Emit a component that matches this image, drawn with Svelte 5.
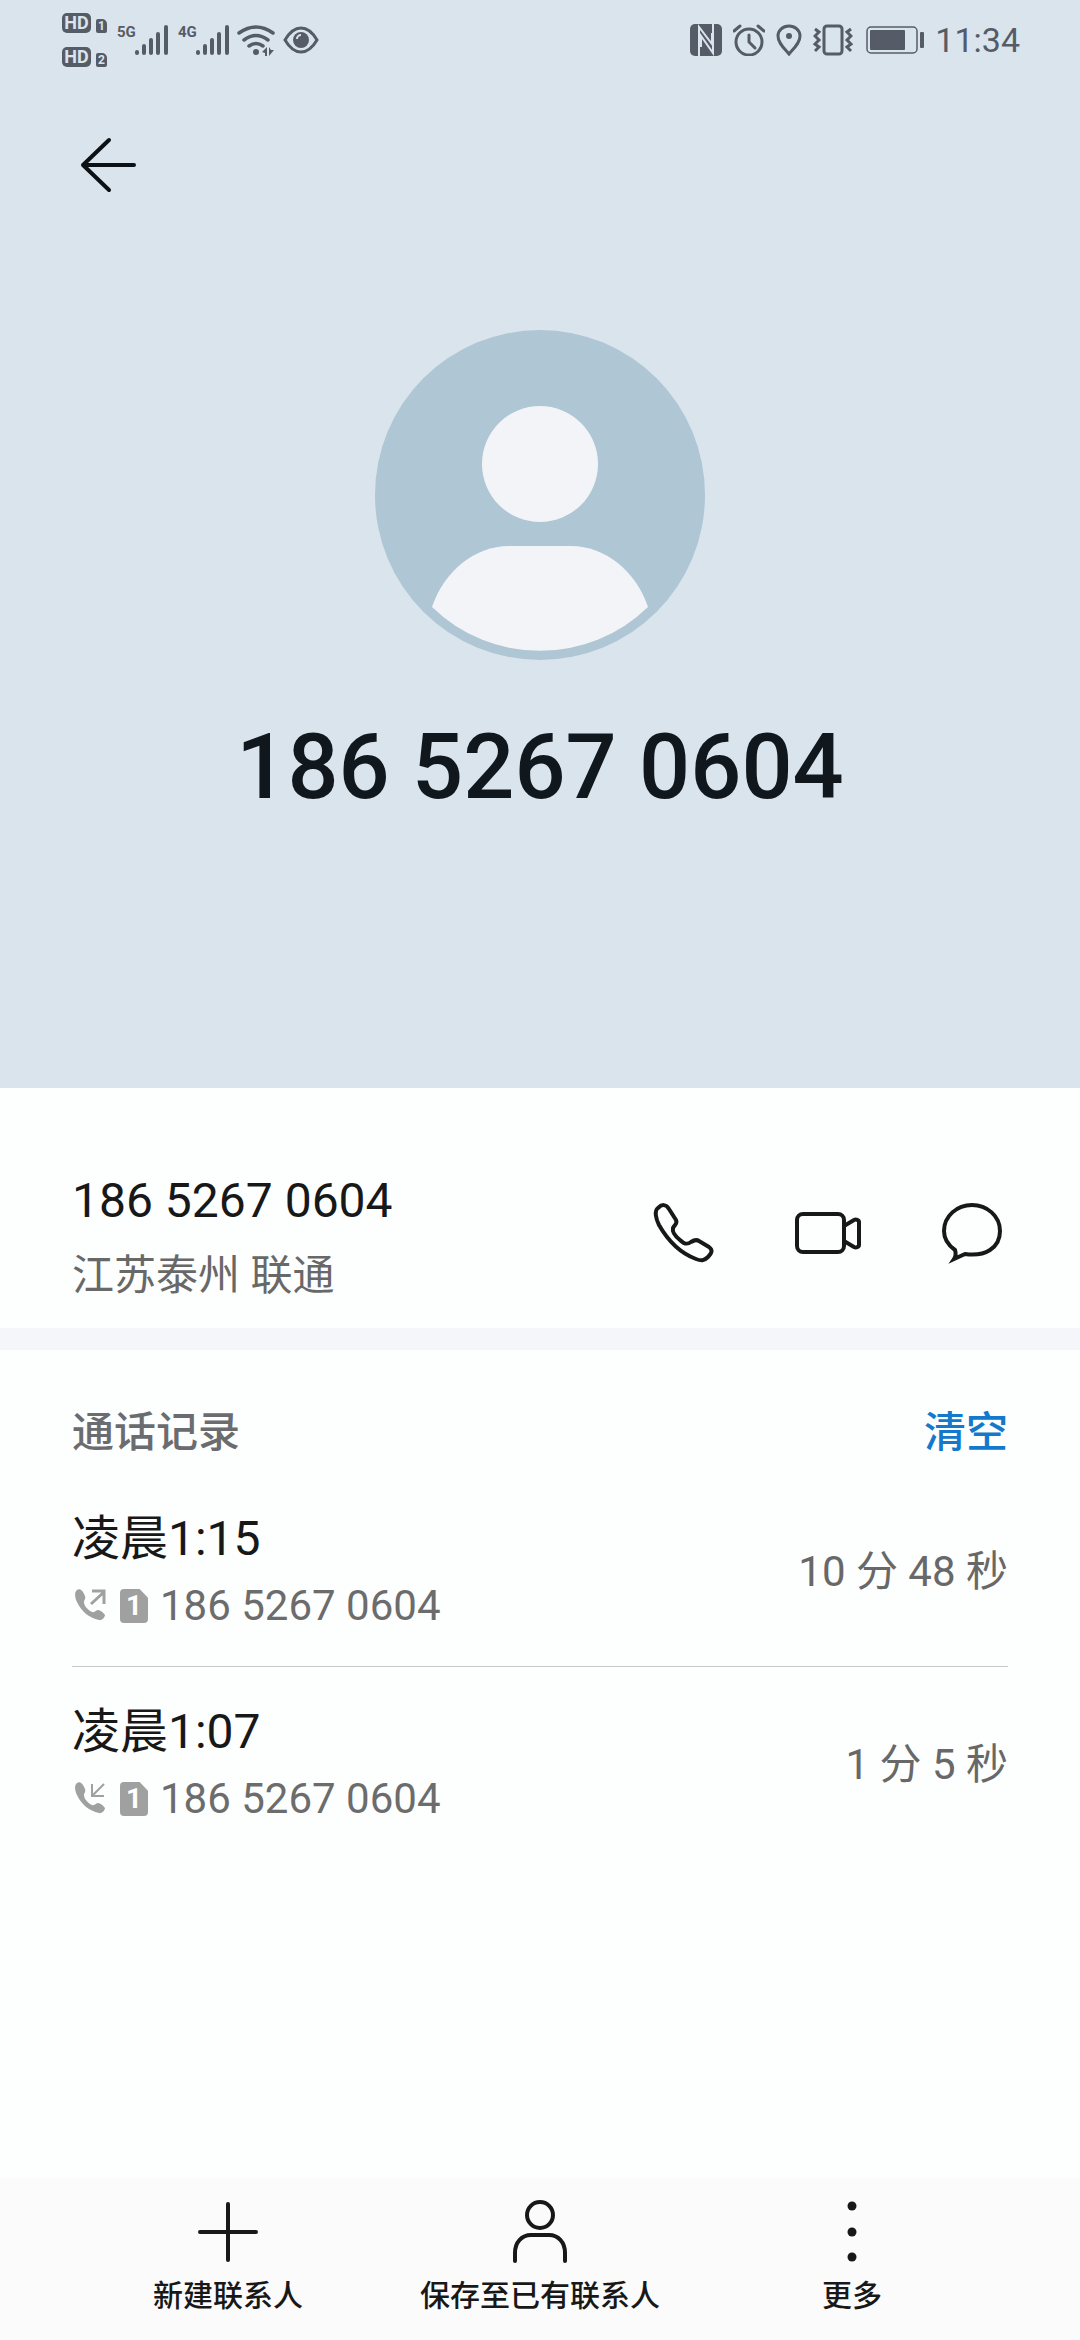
<script>
  const number = '186 5267 0604';
  const region = '江苏泰州 联通';

  let calls = $state([
    { time: '凌晨1:15', type: 'outgoing', sim: 1, duration: '10 分 48 秒' },
    { time: '凌晨1:07', type: 'incoming', sim: 1, duration: '1 分 5 秒' }
  ]);

  function clearCalls() {
    calls = [];
  }
</script>

{#snippet signal()}
  <svg width="36" height="32" viewBox="0 0 36 32" stroke="currentColor" stroke-width="4" stroke-linecap="round">
    <path d="M3 29v-1M10 29v-7M17 29V16M24 29V10M32 29V3" />
  </svg>
{/snippet}

<div class="page">
  <header>
    <div class="status">
      <div class="group">
        <div class="hd-list">
          {#each [1, 2] as slot}
            <div class="hd-row"><span class="hd">HD</span><span class="slot">{slot}</span></div>
          {/each}
        </div>
        <div class="net"><span>5G</span>{@render signal()}</div>
        <div class="net second"><span>4G</span>{@render signal()}</div>
        <svg class="wifi" width="38" height="32" viewBox="0 0 38 32" fill="none" stroke="currentColor" stroke-width="3.5" stroke-linecap="round">
          <path d="M2 9Q19-3 36 9M7 16Q19 7 31 16M12 22Q19 17 26 22" />
          <circle cx="19" cy="28" r="3" fill="currentColor" stroke="none" />
          <path d="M30 23v9h-2v-3l-3-1zM32 23v9l5-6h-3z" fill="currentColor" stroke="none" />
        </svg>
        <svg width="36" height="28" viewBox="0 0 36 28" fill="none" stroke="currentColor" stroke-width="3">
          <path d="M2 14Q9 2 18 2T34 14Q27 26 18 26T2 14z" />
          <circle cx="18" cy="14" r="8" fill="currentColor" stroke="none" />
          <path d="M14 13a4 4 0 0 1 4-4" stroke="#dae4ed" stroke-width="2" />
        </svg>
      </div>
      <div class="group right">
        <svg width="32" height="32" viewBox="0 0 32 32">
          <rect width="32" height="32" rx="5" fill="currentColor" />
          <path d="M9 32V3L22 20V9M23 0v29L11 12v11" fill="none" stroke="#dae4ed" stroke-width="2" />
        </svg>
        <svg width="32" height="32" viewBox="0 0 32 32" fill="none" stroke="currentColor" stroke-width="3">
          <circle cx="16" cy="18" r="13" />
          <path d="M16 11v7l6 6M1 7l6-5M31 7l-6-5" stroke-linecap="round" />
        </svg>
        <svg width="26" height="32" viewBox="0 0 26 32" fill="none" stroke="currentColor" stroke-width="3">
          <path d="M13 30C8 24 2 19 2 12a11 10 0 0 1 22 0c0 7-6 12-11 18z" />
          <circle cx="13" cy="12" r="3" fill="currentColor" stroke="none" />
        </svg>
        <svg width="40" height="32" viewBox="0 0 40 32" fill="none" stroke="currentColor" stroke-width="3">
          <rect x="11" y="2" width="18" height="28" rx="3" />
          <path d="M2 5l4 3-4 4 4 4-4 4 4 3-4 4M38 5l-4 3 4 4-4 4 4 4-4 3 4 4" />
        </svg>
        <svg class="battery" width="58" height="28" viewBox="0 0 58 28">
          <rect x="1" y="1" width="50" height="26" rx="4" fill="none" stroke="currentColor" stroke-width="1.5" />
          <rect x="4" y="4" width="35" height="20" rx="1" fill="currentColor" />
          <rect x="54" y="6" width="4" height="16" rx="1" fill="currentColor" />
        </svg>
        <span class="clock">11:34</span>
      </div>
    </div>

    <button class="back" aria-label="返回">
      <svg width="60" height="60" viewBox="0 0 60 60" fill="none" stroke="currentColor" stroke-width="4" stroke-linecap="round" stroke-linejoin="round">
        <path d="M56 30H5M31 5L5 30l26 25" />
      </svg>
    </button>

    <svg class="avatar" width="330" height="330" viewBox="0 0 330 330">
      <circle cx="165" cy="165" r="165" fill="#afc6d4" />
      <circle cx="165" cy="134" r="58" fill="#f2f4f8" />
      <path d="M57 277C69 241 100 216 134 216h62c34 0 65 25 77 61a155 155 0 0 1-216 0z" fill="#f2f4f8" />
    </svg>
    <h1>{number}</h1>
  </header>

  <section class="contact">
    <div>
      <div class="phone">{number}</div>
      <div class="region">{region}</div>
    </div>
    <div class="actions">
      <button aria-label="拨打电话">
        <svg width="72" height="72" viewBox="0 0 72 72">
          <path d="M10 11C6 14 8 22 11 28C19 42 32 56 48 62C53 64 56 64 60 60C64 56 65 53 61 50L51 44C48 42 46 43 43 45C39 48 36 47 32 43C27 39 24 35 25 31C26 28 30 27 28 23L21 12C18 7 14 7 10 11z" />
        </svg>
      </button>
      <button aria-label="视频通话">
        <svg width="72" height="72" viewBox="0 0 72 72">
          <rect x="5" y="17" width="47" height="38" rx="6" />
          <path d="M52 29l10-6c2-1 5 0 5 2v23c0 2-3 3-5 2l-10-6" />
        </svg>
      </button>
      <button aria-label="发送信息">
        <svg width="72" height="72" viewBox="0 0 72 72">
          <path d="M19 53C12 48 8 41 8 34C8 19 21 8 36 8S64 19 64 34C64 51 49 60 29 57L18 62C20 59 20 56 19 53z" stroke-linejoin="miter" />
        </svg>
      </button>
    </div>
  </section>

  <section class="log">
    <div class="log-head">
      <h2>通话记录</h2>
      <button class="clear" onclick={clearCalls}>清空</button>
    </div>
    <ul>
      {#each calls as call}
        <li>
          <div>
            <div class="time">{call.time}</div>
            <div class="detail">
              <svg width="36" height="36" viewBox="0 0 36 36" fill="none" stroke="#a0a0a0" stroke-width="3">
                <path d="M5 2C2 4 3 10 5 14C9 23 17 30 27 32C30 33 33 29 33 27C32 25 28 22 26 22C24 22 23 25 20 24C16 22 12 18 12 14C12 12 14 11 13 8C11 3 8 0 5 2z" fill="#a0a0a0" stroke="none" />
                {#if call.type === 'outgoing'}
                  <path d="M19 16L32 4M20 3h12v13" />
                {:else}
                  <path d="M32 3L20 15M20 3v12h12" stroke-width="2" />
                {/if}
              </svg>
              <span class="sim">{call.sim}</span>
              <span>{number}</span>
            </div>
          </div>
          <div class="duration">{call.duration}</div>
        </li>
      {/each}
    </ul>
  </section>

  <nav>
    <button>
      <svg width="72" height="72" viewBox="0 0 72 72"><path d="M36 8v56M8 36h56" /></svg>
      <span>新建联系人</span>
    </button>
    <button>
      <svg width="72" height="72" viewBox="0 0 72 72">
        <circle cx="36" cy="19" r="13" />
        <path d="M11 65V57C11 46 18 39 27 39h18c9 0 16 7 16 18v8" />
      </svg>
      <span>保存至已有联系人</span>
    </button>
    <button>
      <svg width="72" height="72" viewBox="0 0 72 72">
        <g fill="currentColor" stroke="none">
          <circle cx="36" cy="10" r="4.5" />
          <circle cx="36" cy="36" r="4.5" />
          <circle cx="36" cy="61" r="4.5" />
        </g>
      </svg>
      <span>更多</span>
    </button>
  </nav>
</div>

<style>
  :global(body) {
    margin: 0;
    background: #fdfefe;
  }
  .page {
    display: flex;
    flex-direction: column;
    min-height: 100vh;
    font-family: Roboto, 'Noto Sans CJK SC', sans-serif;
    color: #181818;
  }
  svg {
    display: block;
    flex: none;
  }
  button {
    padding: 0;
    border: 0;
    background: none;
    color: inherit;
    font: inherit;
    cursor: pointer;
  }
  h1, h2, ul {
    margin: 0;
    padding: 0;
  }

  header {
    display: flex;
    flex-direction: column;
    align-items: center;
    padding-bottom: 264px;
    background: #dae4ed;
  }
  .status {
    align-self: stretch;
    display: flex;
    justify-content: space-between;
    height: 80px;
    padding: 0 60px;
    color: #555c68;
  }
  .group {
    display: flex;
    align-items: center;
  }
  .right {
    gap: 11px;
  }
  .hd-list {
    display: flex;
    flex-direction: column;
    gap: 14px;
    padding-left: 2px;
  }
  .hd-row {
    display: flex;
    align-items: flex-end;
    gap: 5px;
  }
  .hd, .slot {
    background: #555c68;
    color: #dae4ed;
    font-weight: 700;
    text-align: center;
  }
  .hd {
    width: 29px;
    border-radius: 5px;
    font-size: 18px;
    line-height: 20px;
  }
  .slot {
    width: 11px;
    border-radius: 2px 5px 2px 2px;
    font-size: 12px;
    line-height: 14px;
  }
  .net {
    display: flex;
    align-items: flex-start;
    margin-left: 10px;
  }
  .net span {
    width: 17px;
    font-size: 15px;
    font-weight: 700;
    line-height: 16px;
  }
  .net.second {
    margin-left: 8px;
  }
  .wifi {
    margin: 0 8px 0 6px;
  }
  .clock {
    font-size: 34px;
    line-height: 40px;
  }
  .battery {
    margin-left: 2px;
  }
  .back {
    align-self: flex-start;
    margin: 55px 0 0 78px;
    color: #0c1116;
  }
  .avatar {
    margin-top: 135px;
  }
  h1 {
    margin-top: 52px;
    color: #10171d;
    font-size: 90px;
    font-weight: 500;
    line-height: 112px;
  }

  .contact {
    display: flex;
    justify-content: space-between;
    align-items: flex-start;
    padding: 76px 72px 14px;
    border-bottom: 22px solid #f4f6fa;
  }
  .phone {
    font-size: 48px;
    line-height: 74px;
  }
  .region {
    color: #686868;
    font-size: 42px;
    line-height: 76px;
  }
  .actions {
    display: flex;
    gap: 72px;
    padding-top: 33px;
  }
  .actions svg, nav svg {
    fill: none;
    stroke: currentColor;
    stroke-width: 4;
    stroke-linecap: round;
    stroke-linejoin: round;
  }

  .log {
    flex: 1;
    padding: 0 72px;
  }
  .log-head {
    display: flex;
    justify-content: space-between;
    padding: 53px 0 11px;
    line-height: 60px;
  }
  h2, .clear {
    font-size: 42px;
    font-weight: 500;
  }
  h2 {
    color: #6a6c6f;
  }
  .clear {
    color: #1479cc;
  }
  ul {
    list-style: none;
  }
  li {
    display: flex;
    justify-content: space-between;
    align-items: center;
    padding: 31px 0 27px;
  }
  li + li {
    border-top: 1px solid #c8c8c8;
  }
  .time {
    font-size: 48px;
    line-height: 68px;
  }
  .detail {
    display: flex;
    align-items: center;
    gap: 12px;
    color: #6c6c6c;
    font-size: 42px;
    line-height: 66px;
  }
  .sim {
    width: 28px;
    border-radius: 4px;
    background: #a0a0a0;
    clip-path: polygon(0 0, 70% 0, 100% 26%, 100% 100%, 0 100%);
    color: #fff;
    font-size: 28px;
    font-weight: 700;
    line-height: 34px;
    text-align: center;
  }
  .duration {
    color: #686868;
    font-size: 42px;
    line-height: 66px;
  }

  nav {
    display: grid;
    grid-template-columns: repeat(3, 1fr);
    padding: 18px 72px 24px;
    background: #fbfbfc;
  }
  nav button {
    display: flex;
    flex-direction: column;
    align-items: center;
    gap: 8px;
    font-size: 30px;
    font-weight: 500;
    line-height: 40px;
  }
</style>
